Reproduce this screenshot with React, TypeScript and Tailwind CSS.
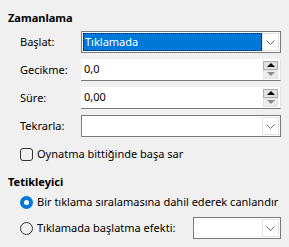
import React from 'react';

const font = { fontFamily: '"Noto Sans", "Liberation Sans", Arial, sans-serif' };

function Chevron() {
  return (
    <svg width="9" height="5" viewBox="0 0 9 5" className="block">
      <path d="M0.5 0.5 L4.5 4.5 L8.5 0.5" fill="none" stroke="#6d6d6d" strokeWidth="1" />
    </svg>
  );
}

function DropButton() {
  return (
    <div className="flex w-[17px] items-center justify-center self-stretch border border-[#e3e3e3] bg-white">
      <Chevron />
    </div>
  );
}

function Combo({ value, selected, className }: { value?: string; selected?: boolean; className: string }) {
  return (
    <div className={`flex border border-[#7a7a7a] bg-white p-px ${className}`}>
      <div
        className={`flex flex-1 items-center px-[2px] ${
          selected ? 'bg-[#0078d7] text-white outline-1 outline-dotted outline-black -outline-offset-1' : 'text-black'
        }`}
      >
        {value}
      </div>
      <DropButton />
    </div>
  );
}

function Spin({ value }: { value: string }) {
  return (
    <div className="flex h-[22px] w-[200px] border-b border-[#7a7a7a] border-r border-r-[#e3e3e3] bg-white">
      <div className="flex flex-1 items-center pl-[3px] text-black">{value}</div>
      <div className="mr-[2px] flex flex-col justify-center">
        <div className="flex h-[9px] w-[15px] items-center justify-center border border-[#adadad] bg-[#e1e1e1]">
          <div className="h-0 w-0 border-x-[4px] border-b-[4px] border-x-transparent border-b-black" />
        </div>
        <div className="flex h-[9px] w-[15px] items-center justify-center border border-[#e3e3e3] bg-[#ececec]">
          <div className="h-0 w-0 border-x-[4px] border-t-[4px] border-x-transparent border-t-[#8a8a8a]" />
        </div>
      </div>
    </div>
  );
}

function Row({ label, children }: { label: string; children: React.ReactNode }) {
  return (
    <div className="flex items-center">
      <span className="w-[61px] text-black">{label}</span>
      {children}
    </div>
  );
}

export default function App() {
  return (
    <div className="h-[247px] w-[289px] bg-[#f0f0f0] pl-[8px] pt-[10px] text-[11px]" style={font}>
      <div className="font-bold leading-[16px] text-black">Zamanlama</div>

      <div className="mt-[5px] flex flex-col gap-[6px] pl-[12px]">
        <Row label="Başlat:">
          <Combo value="Tıklamada" selected className="h-[22px] w-[200px]" />
        </Row>
        <Row label="Gecikme:">
          <Spin value="0,0" />
        </Row>
        <Row label="Süre:">
          <Spin value="0,00" />
        </Row>
        <Row label="Tekrarla:">
          <Combo className="h-[22px] w-[200px]" />
        </Row>
      </div>

      <label className="mt-[9px] flex h-[16px] items-center gap-[4px] pl-[12px] text-black">
        <span className="h-[13px] w-[13px] rounded-[3px] border border-[#333]" />
        Oynatma bittiğinde başa sar
      </label>

      <div className="mt-[12px] font-bold leading-[16px] text-black">Tetikleyici</div>

      <div className="mt-[4px] flex h-[16px] items-center gap-[4px] pl-[12px] text-black">
        <span className="flex h-[13px] w-[13px] items-center justify-center rounded-full bg-[#0078d7]">
          <span className="h-[5px] w-[5px] rounded-full bg-white" />
        </span>
        Bir tıklama sıralamasına dahil ederek canlandır
      </div>

      <div className="mt-[7px] flex h-[22px] items-center gap-[4px] pl-[12px] text-black">
        <span className="h-[13px] w-[13px] rounded-full border border-[#333]" />
        <span className="w-[152px]">Tıklamada başlatma efekti:</span>
        <Combo className="h-[22px] w-[88px]" />
      </div>
    </div>
  );
}
